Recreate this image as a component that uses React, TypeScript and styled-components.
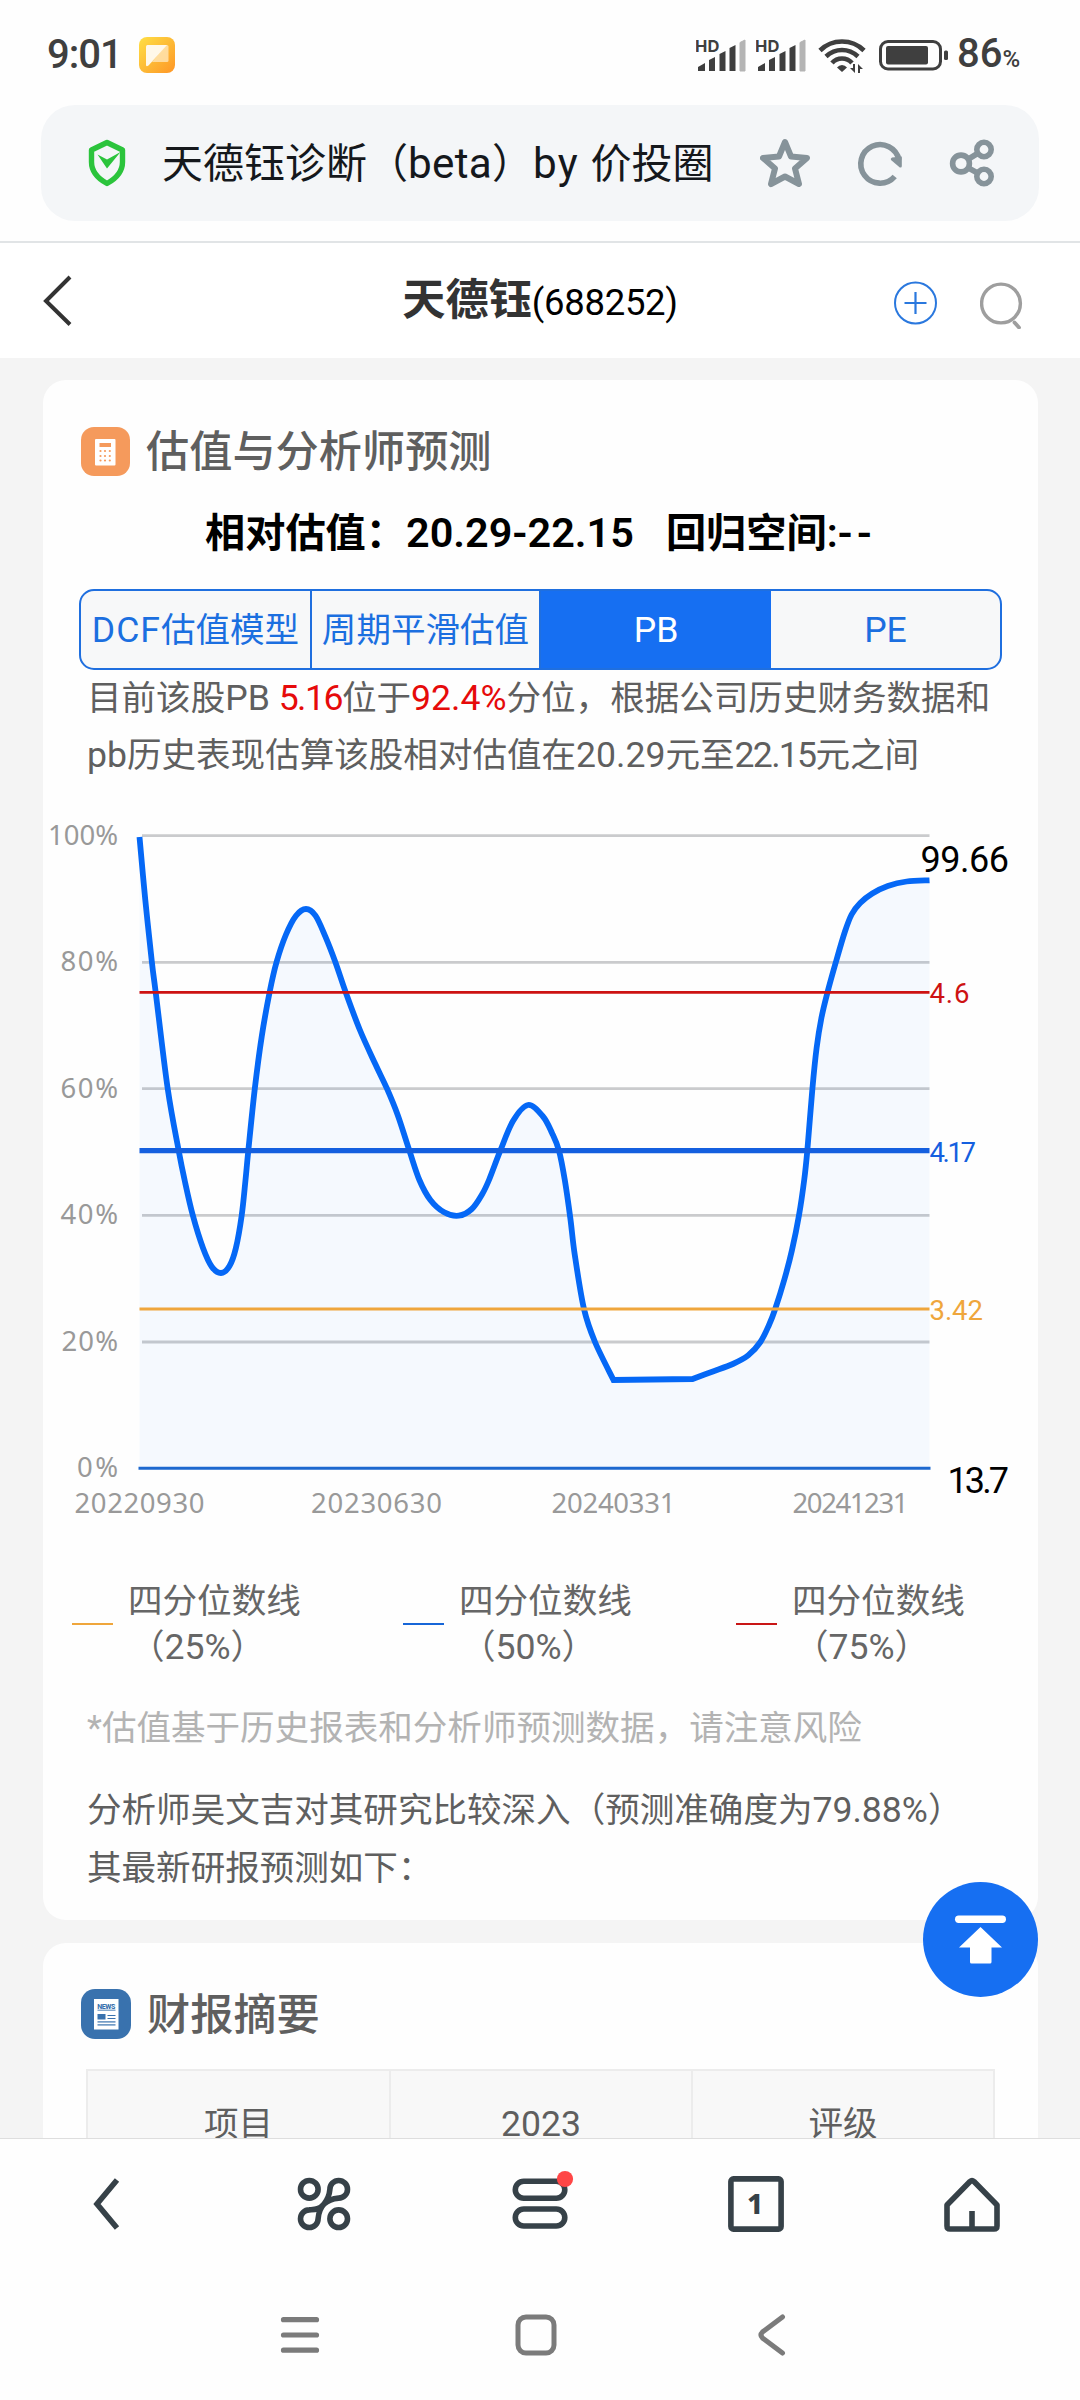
import React from "react";
import styled, { createGlobalStyle } from "styled-components";

const GlobalStyle = createGlobalStyle`
  * { box-sizing: border-box; }
  html, body { margin: 0; padding: 0; }
  body { background: #fefefe; }
  svg { display: block; flex: none; }
`;

const Screen = styled.div`
  position: relative;
  display: flex;
  flex-direction: column;
  width: 1080px;
  height: 2400px;
  overflow: hidden;
  background: #fefefe;
  color: #5f5f5f;
  font-family: Roboto, "Noto Sans CJK SC", sans-serif;
  font-size: 34.56px;
  white-space: nowrap;
`;

/* ---------- system status bar ---------- */

const StatusBar = styled.header`
  display: flex;
  flex: none;
  align-items: center;
  justify-content: space-between;
  height: 105px;
  padding: 4px 57px 0 47px;
  color: #3f3f3f;
`;

const StatusGroup = styled.div`
  display: flex;
  align-items: center;
`;

const Clock = styled.span`
  width: 92px;
  font-size: 40px;
  font-weight: 500;
  line-height: 48px;
  letter-spacing: -1px;
`;

const BatteryBox = styled.span`
  margin-left: 12px;
`;

const BatteryLevel = styled.span`
  display: flex;
  align-items: baseline;
  width: 66px;
  margin-left: 7px;
  padding-top: 3px;
  font-size: 40px;
  font-weight: 500;
  line-height: 48px;
`;

const Percent = styled.small`
  font-size: 24px;
`;

/* ---------- browser address bar ---------- */

const AddressWrap = styled.div`
  flex: none;
  height: 138px;
  padding: 0 41px;
  border-bottom: 2px solid #e1e4e6;
`;

const AddressBar = styled.div`
  display: flex;
  align-items: center;
  height: 116px;
  padding: 0 44px 0 47px;
  border-radius: 34px;
  background: #f4f6f8;
`;

const PageTitle = styled.span`
  flex: 1;
  margin-left: 36px;
  padding-top: 2px;
  color: #15181c;
  font-size: 41px;
  line-height: 60px;
`;

const AddressActions = styled.div`
  display: flex;
  align-items: center;
  gap: 45.5px;
`;

/* ---------- page header ---------- */

const PageHeader = styled.div`
  display: grid;
  flex: none;
  grid-template-columns: 300px 1fr 300px;
  align-items: center;
  height: 115px;
  padding: 0 56px 0 42px;
  background: #fff;
`;

const StockName = styled.h1`
  display: flex;
  align-items: baseline;
  justify-content: center;
  margin: 0 0 0 14px;
  padding-top: 2px;
  color: #333;
  font-size: 43.2px;
  font-weight: 700;
  line-height: 60px;
`;

const StockCode = styled.span`
  color: #000;
  font-size: 36.5px;
  font-weight: 400;
  letter-spacing: -0.3px;
`;

const HeaderActions = styled.div`
  display: flex;
  justify-content: flex-end;
  gap: 42px;
  padding-top: 6px;
`;

/* ---------- content ---------- */

const Content = styled.main`
  display: flex;
  flex: 1;
  flex-direction: column;
  gap: 23px;
  min-height: 0;
  padding: 22px 42px 0 43px;
  overflow: hidden;
  background: #f4f4f4;
`;

const Card = styled.section<{ $top: number }>`
  display: flex;
  flex: none;
  flex-direction: column;
  padding: ${(p) => p.$top}px 0 23px;
  border-radius: 23px;
  background: #fefefe;
`;

const CardTitle = styled.h2<{ $height: number }>`
  display: flex;
  align-items: center;
  gap: 16px;
  height: ${(p) => p.$height}px;
  margin: 0 0 0 38px;
  color: #5f5f5f;
  font-size: 43.2px;
  font-weight: 500;
  line-height: 48px;
`;

const CardTitleText = styled.span`
  padding-top: 4px;
`;

const Headline = styled.p`
  display: flex;
  justify-content: center;
  gap: 32px;
  margin: 28px 0 0;
  color: #000;
  font-size: 40.2px;
  font-weight: 600;
  line-height: 62px;
`;

const Num = styled.span<{ $red?: boolean; $track?: number }>`
  color: ${(p) => (p.$red ? "#e60a0a" : "inherit")};
  font-size: 1.03em;
  line-height: 0;
  letter-spacing: ${(p) => p.$track ?? 0}px;
`;

const Tabs = styled.div`
  display: grid;
  grid-template-columns: 229px 229px 232px 1fr;
  height: 81px;
  margin: 24px 36px 0;
  overflow: hidden;
  border: 2px solid #1f6fdf;
  border-radius: 15px;
  background: #f7f8f9;
`;

const Tab = styled.button<{ $active?: boolean }>`
  padding: 0;
  border: 0;
  border-left: 2px solid #1f6fdf;
  background: ${(p) => (p.$active ? "#166ff2" : "transparent")};
  color: ${(p) => (p.$active ? "#fff" : "#1b6fe0")};
  font: inherit;
  line-height: 70px;
  white-space: nowrap;

  &:first-child,
  &:last-child {
    border-left: 0;
  }
`;

const Paragraph = styled.p<{ $gap: number; $muted?: boolean; $leading?: number }>`
  margin: ${(p) => p.$gap}px 0 0 44px;
  color: ${(p) => (p.$muted ? "#b3b3b3" : "#5f5f5f")};
  line-height: ${(p) => p.$leading ?? 57}px;
`;

const Chart = styled.svg`
  margin-top: 16px;
  font-family: Roboto, sans-serif;
`;

const Legend = styled.ul`
  display: grid;
  grid-template-columns: 331px 333px 1fr;
  margin: 38px 0 0 29px;
  padding: 0;
  list-style: none;
`;

const LegendItem = styled.li<{ $color: string }>`
  display: flex;
  align-items: center;
  gap: 15px;
  color: #666;
  line-height: 46px;

  &::before {
    width: 41px;
    height: 2px;
    background: ${(p) => p.$color};
    content: "";
  }
`;

const LegendShare = styled.span`
  margin-left: 2px;
`;

const ReportTable = styled.div`
  display: grid;
  grid-template-columns: 301px 302px 1fr;
  height: 160px;
  margin: 30px 43px 0;
  border: 2px solid #ececec;
  background: #f8f8f8;
`;

const ReportCell = styled.div`
  padding-top: 23px;
  line-height: 60px;
  text-align: center;

  & + & {
    border-left: 2px solid #ececec;
  }
`;

/* ---------- floating button and bottom bars ---------- */

const BackToTop = styled.button`
  position: absolute;
  top: 1882px;
  right: 42px;
  width: 115px;
  height: 115px;
  padding: 0;
  border: 0;
  border-radius: 50%;
  background: #166ff2;
`;

const Toolbar = styled.nav`
  display: grid;
  flex: none;
  grid-template-columns: repeat(5, 1fr);
  align-items: center;
  justify-items: center;
  height: 132px;
  padding-bottom: 2px;
  border-top: 1px solid #dedede;
  background: #fefefe;
`;

const SystemNav = styled.nav`
  display: grid;
  flex: none;
  grid-template-columns: repeat(3, 236px);
  align-items: center;
  justify-items: center;
  height: 130px;
  padding-left: 182px;
  background: #fefefe;
`;

/* ---------- icons ---------- */

const AppIcon = () => (
  <svg width="36" height="36" viewBox="0 0 36 36">
    <defs>
      <linearGradient id="app-bg" x1="0" y1="0" x2="1" y2="1">
        <stop offset="0" stopColor="#ffdf45" />
        <stop offset="0.5" stopColor="#fdbb36" />
        <stop offset="1" stopColor="#ff9626" />
      </linearGradient>
    </defs>
    <rect width="36" height="36" rx="8" fill="url(#app-bg)" />
    <path d="M27 8h1q1.500 0 1.500 1.500v14q0 1.500-1.500 1.500H13z" fill="#ffe3b0" opacity="0.85" />
    <path d="M8.500 8H28L9.500 28.500Q7 30 7 28V9.500Q7 8 8.500 8z" fill="#fff8ea" />
  </svg>
);

const Signal = () => (
  <svg width="60" height="36" viewBox="0 0 60 36">
    <text x="-1" y="14.500" fontFamily="Inter, sans-serif" fontSize="16.500" fontWeight="700" fill="#3f3f3f" textLength="24.500">HD</text>
    <path d="M2 34v-4l7-4v8zM13 34V23l6-3v14zM23.500 34V17l6-3v20zM33.500 34V11l6-3v26z" fill="#3f3f3f" />
    <path d="M44 34V5.500l5-2.500v31z" fill="#b4b4b4" stroke="#b4b4b4" strokeLinejoin="round" />
  </svg>
);

const Wifi = () => (
  <svg width="50" height="36" viewBox="0 0 50 36">
    <g fill="none" stroke="#3f3f3f" strokeWidth="4.600">
      <path d="M4 13.500Q13 4.500 26 4.500T48 13.500" />
      <path d="M10 19.500Q17 13 26 13T42 19.500" />
      <path d="M16 26Q20 21.500 26 21.500T36 26" />
    </g>
    <path d="M26 28q3 0 5 2.500L26 35l-5-4.500Q23 28 26 28z" fill="#3f3f3f" />
    <path d="M39 27v9l-5-5h3v-4zM42 36v-9l5 5h-3v4z" fill="#3f3f3f" />
  </svg>
);

const BatteryIcon = () => (
  <svg width="72" height="32" viewBox="0 0 72 32">
    <rect x="2.500" y="2.500" width="60" height="27.500" rx="7.500" fill="none" stroke="#3f3f3f" strokeWidth="3" />
    <rect x="8" y="7" width="42" height="18.500" rx="2" fill="#3f3f3f" />
    <rect x="66" y="11.500" width="4" height="9.500" rx="1.500" fill="#3f3f3f" />
  </svg>
);

const Shield = () => (
  <svg width="38" height="48" viewBox="0 0 38 48">
    <path d="M19 3.500 34.500 11v12q0 13-15.500 21.500Q3.500 36 3.500 23V11z" fill="none" stroke="#2bc43c" strokeWidth="5.400" strokeLinejoin="round" />
    <path d="M9.500 15.500 19 20.500 32.500 13 19 29.500z" fill="#2bc43c" />
  </svg>
);

const Star = () => (
  <svg width="50" height="50" viewBox="0 0 50 50">
    <path
      d="M25 4 31 18.500 47 20 35 30.500 39 46 25 38.500 11 46 15 30.500 3 20 19 18.500z"
      fill="none"
      stroke="#86939a"
      strokeWidth="6"
      strokeLinejoin="round"
    />
  </svg>
);

const Refresh = () => (
  <svg width="48" height="48" viewBox="0 0 48 48">
    <path d="M38.700 37.500A19.300 19.300 0 1 1 43 21" fill="none" stroke="#86939a" strokeWidth="5.600" />
    <path d="M45.800 17.500V27q0 2-2 1.500L35 21q-1-1.500 1-2.500z" fill="#86939a" />
  </svg>
);

const Share = () => (
  <svg width="46" height="50" viewBox="0 0 46 50">
    <g fill="none" stroke="#86939a" strokeWidth="5.600">
      <circle cx="12" cy="25.500" r="8.400" />
      <circle cx="35" cy="11.500" r="7.200" />
      <circle cx="35" cy="38.500" r="7.200" />
      <path d="M19.500 21 28.500 15.500M19.500 30 28.500 35" />
    </g>
  </svg>
);

const HeaderBack = () => (
  <svg width="32" height="52" viewBox="0 0 32 52">
    <path d="M28 2 4 26 28 49.500" fill="none" stroke="#333" strokeWidth="4" />
  </svg>
);

const AddCircle = () => (
  <svg width="44" height="46" viewBox="0 0 44 46">
    <circle cx="21.500" cy="24" r="20.500" fill="none" stroke="#2a78de" strokeWidth="2" />
    <path d="M21.500 13v22M10.500 24h22" stroke="#2a78de" strokeWidth="2.200" />
  </svg>
);

const Search = () => (
  <svg width="44" height="50" viewBox="0 0 44 50">
    <circle cx="21" cy="24.500" r="19.400" fill="none" stroke="#9e9e9e" strokeWidth="3.400" />
    <path d="M34.500 43.500 39 48.500" stroke="#9e9e9e" strokeWidth="3.800" strokeLinecap="round" />
  </svg>
);

const Calculator = () => (
  <svg width="49" height="49" viewBox="0 0 49 49">
    <rect width="49" height="49" rx="13" fill="#f59a5c" />
    <rect x="14" y="12" width="20.500" height="26.500" rx="1" fill="#fff" />
    <rect x="18.500" y="16" width="11.500" height="4" fill="#f59a5c" />
    <g fill="#f59a5c">
      {[24, 29, 33.5].map((y) =>
        [19.5, 24, 28.8].map((x) => <circle key={`${x}-${y}`} cx={x} cy={y} r="1.1" />)
      )}
    </g>
  </svg>
);

const Newspaper = () => (
  <svg width="50" height="50" viewBox="0 0 50 50">
    <rect width="50" height="50" rx="14" fill="#3972ae" />
    <rect x="13" y="10" width="24.500" height="30.500" fill="#fff" />
    <text x="16.300" y="19.500" fontFamily="Roboto, sans-serif" fontSize="7" fontWeight="800" fill="#3972ae" textLength="18">NEWS</text>
    <g fill="#3972ae">
      <rect x="16.500" y="20.700" width="18" height="0.900" />
      <rect x="16.500" y="25" width="8" height="5.500" />
      <rect x="26.500" y="26" width="8" height="1" />
      <rect x="26.500" y="29" width="8" height="1" />
      <rect x="16.500" y="32.300" width="18" height="1.200" />
      <rect x="16.500" y="35.300" width="18" height="1.200" />
    </g>
  </svg>
);

const ToTop = () => (
  <svg width="115" height="115" viewBox="0 0 115 115">
    <rect x="32" y="33.500" width="51" height="7.500" rx="3.700" fill="#fff" />
    <path d="M57.500 45 79 65.500H68.500V80q0 1.500-1.500 1.500H48.500Q47 81.500 47 80V65.500H36z" fill="#fff" />
  </svg>
);

const toolStroke = { fill: "none", stroke: "#364148", strokeWidth: 5.6 };

const ToolBack = () => (
  <svg width="32" height="56" viewBox="0 0 32 56">
    <path d="M25 4 5 28l20 24" {...toolStroke} />
  </svg>
);

const ToolApps = () => (
  <svg width="56" height="56" viewBox="0 0 56 56">
    <g {...toolStroke}>
      <circle cx="13.300" cy="13.300" r="8.800" />
      <circle cx="42.700" cy="42.700" r="8.800" />
      <path d="M28 28C33 22 33.500 18 33.900 13.300A8.800 8.800 0 1 1 42.700 22.100C38 22.500 33 23 28 28C23 33 22.500 38 22.100 42.700A8.800 8.800 0 1 1 13.300 33.900C18 33.500 23 34 28 28z" strokeLinejoin="round" />
    </g>
  </svg>
);

const ToolMenu = () => (
  <svg width="68" height="68" viewBox="-4 0 68 68">
    <g {...toolStroke}>
      <rect x="5.300" y="11.300" width="49.500" height="17" rx="8.500" />
      <rect x="5.300" y="39" width="49.500" height="17" rx="8.500" />
    </g>
    <circle cx="55" cy="9" r="8.100" fill="#ff4646" />
  </svg>
);

const ToolWindows = () => (
  <svg width="56" height="56" viewBox="0 0 56 56">
    <rect x="2.900" y="2.900" width="50.200" height="50.200" rx="2.500" {...toolStroke} />
    <text x="27" y="37.500" fontFamily="Noto Sans, sans-serif" fontSize="28" fontWeight="800" fill="#364148" textAnchor="middle">1</text>
  </svg>
);

const ToolHome = () => (
  <svg width="58" height="56" viewBox="0 0 58 56">
    <path d="M4 29 27 5.500q2-1.800 4 0L54 29v21q0 3-3 3H7q-3 0-3-3z" {...toolStroke} strokeLinejoin="round" />
    <path d="M29 35v18" {...toolStroke} />
  </svg>
);

const NavMenu = () => (
  <svg width="40" height="40" viewBox="0 0 40 40">
    <path d="M3.500 4.700h33M3.500 20h33M3.500 35.200h33" stroke="#7b7b7b" strokeWidth="5.200" strokeLinecap="round" />
  </svg>
);

const NavHome = () => (
  <svg width="42" height="42" viewBox="0 0 42 42">
    <rect x="3" y="3" width="36" height="36" rx="8" fill="none" stroke="#7b7b7b" strokeWidth="5" />
  </svg>
);

const NavBack = () => (
  <svg width="30" height="44" viewBox="0 0 30 44">
    <path d="M25.500 4 5.500 19q-3 3 0 6l20 15" fill="none" stroke="#7b7b7b" strokeWidth="5" strokeLinecap="round" />
  </svg>
);

/* ---------- chart ---------- */

type Point = [number, number];

const fallAndRise: Point[] = [
  [139.5, 837], [145.3, 900], [151.9, 962.3], [155.7, 992.3], [167.7, 1088.7], [178.7, 1150.7],
  [184.6, 1180], [192.8, 1215.3], [203, 1248], [211.8, 1266.7], [221, 1273],
  [229.5, 1266], [235.9, 1248], [241.7, 1215.3], [245.5, 1180], [248.3, 1150.7],
  [254.8, 1088.7], [261.7, 1036.7], [269.6, 992.3], [276.5, 962.3], [285.8, 935],
  [296, 915.7], [306, 909], [315.5, 915.7], [325.4, 936.7], [335.4, 962.3],
  [345.7, 992.3], [359.9, 1030], [375.3, 1064], [387, 1088.7], [397.7, 1115],
  [409.4, 1150.7], [419.4, 1180], [430.4, 1200], [444.2, 1212.3], [458.7, 1215.7],
  [471.8, 1209], [482, 1194.5], [489, 1180], [500.3, 1150.7], [513, 1121],
  [528, 1105], [543, 1116.5], [552, 1133], [559, 1150.7], [564.8, 1180],
  [570.3, 1218], [574.8, 1255], [584, 1309], [595, 1342], [613.5, 1380],
];

const recovery: Point[] = [
  [692.5, 1379], [712.2, 1371.7], [732.8, 1364], [748.3, 1355.3], [760.4, 1342],
  [769, 1325], [775.2, 1309], [784.5, 1279], [792, 1250], [799, 1215.3],
  [804.2, 1180], [807.3, 1150.7], [812.4, 1088.7], [816.6, 1048], [821.4, 1018],
  [827.5, 992.3], [835.8, 962.3], [844.8, 932], [851.6, 914.5], [860.2, 903],
  [872.3, 893.5], [887.8, 886], [906.7, 881.5], [929.5, 880.3],
];

/* Catmull-Rom interpolation expressed as cubic Bézier segments. */
const smooth = (pts: Point[]) =>
  pts
    .slice(1)
    .map((p, i) => {
      const a = pts[Math.max(i - 1, 0)];
      const b = pts[i];
      const d = pts[Math.min(i + 2, pts.length - 1)];
      return `C${b[0] + (p[0] - a[0]) / 6} ${b[1] + (p[1] - a[1]) / 6} ${p[0] - (d[0] - b[0]) / 6} ${p[1] - (d[1] - b[1]) / 6} ${p[0]} ${p[1]}`;
    })
    .join("");

const curve = `M139.5 837${smooth(fallAndRise)}L692.5 1379${smooth(recovery)}`;

const yTicks: [string, number, number][] = [
  ["100%", 835.7, 70], ["80%", 962.3, 57.5], ["60%", 1088.7, 57.5],
  ["40%", 1215.3, 57.5], ["20%", 1342, 56.5], ["0%", 1468.3, 41],
];

const xTicks: [string, number, number][] = [
  ["20220930", 139.5, 130], ["20230630", 376.5, 131],
  ["20240331", 613.5, 124], ["20241231", 850.5, 116],
];

const quartiles: [string, number, number, string, number][] = [
  ["3.42", 1309, 3, "#efa63c", 53.5],
  ["4.17", 1150.7, 5.2, "#145fdf", 46.5],
  ["4.6", 992.3, 2.8, "#cd1212", 40],
];

const QuartileChart = () => (
  <Chart width="995" height="740" viewBox="43 800 995 740">
    {yTicks.map(([label, y, w]) => (
      <g key={label}>
        {y < 1400 && <path d={`M142 ${y}H929.5`} stroke="#cacbcd" strokeWidth="2.8" />}
        <text x={118 - w} y={y + 9} fontFamily="Noto Sans, sans-serif" fontSize="27.5" fill="#999" textLength={w}>{label}</text>
      </g>
    ))}
    {xTicks.map(([label, x, w]) => (
      <text key={label} x={x - w / 2} y="1512.500" fontFamily="Noto Sans, sans-serif" fontSize="27.5" fill="#999" textLength={w}>{label}</text>
    ))}
    <path d={`${curve}V1468.300H139.500z`} fill="rgba(6, 125, 250, 0.037)" />
    <path d="M138.500 1468.300H930.500" stroke="#1c68cf" strokeWidth="3" />
    <path d={curve} fill="none" stroke="#0568f6" strokeWidth="5.800" />
    {quartiles.map(([label, y, thickness, color, w]) => (
      <g key={label}>
        <path d={`M139.500 ${y}H929.500`} stroke={color} strokeWidth={thickness} />
        <text x="929.500" y={y + 11} fontSize="27.500" fill={color} textLength={w}>{label}</text>
      </g>
    ))}
    <text x="920.500" y="871.500" fontSize="36" fill="#000" textLength="88.500">99.66</text>
    <text x="947.500" y="1492.500" fontSize="36" fill="#000" textLength="61.500">13.7</text>
  </Chart>
);

const legend: [string, string][] = [
  ["25%", "#efa63c"],
  ["50%", "#1766d8"],
  ["75%", "#c91616"],
];

export default function App() {
  return (
    <Screen>
      <GlobalStyle />

      <StatusBar>
        <StatusGroup>
          <Clock>9:01</Clock>
          <AppIcon />
        </StatusGroup>
        <StatusGroup>
          <Signal />
          <Signal />
          <Wifi />
          <BatteryBox>
            <BatteryIcon />
          </BatteryBox>
          <BatteryLevel>
            86<Percent>%</Percent>
          </BatteryLevel>
        </StatusGroup>
      </StatusBar>

      <AddressWrap>
        <AddressBar>
          <Shield />
          <PageTitle>
            天德钰诊断（<Num $track={0.3}>beta</Num>）<Num $track={1.2}>by </Num>价投圈
          </PageTitle>
          <AddressActions>
            <Star />
            <Refresh />
            <Share />
          </AddressActions>
        </AddressBar>
      </AddressWrap>

      <PageHeader>
        <HeaderBack />
        <StockName>
          天德钰<StockCode>(688252)</StockCode>
        </StockName>
        <HeaderActions>
          <AddCircle />
          <Search />
        </HeaderActions>
      </PageHeader>

      <Content>
        <Card $top={47}>
          <CardTitle $height={48}>
            <Calculator />
            <CardTitleText>估值与分析师预测</CardTitleText>
          </CardTitle>
          <Headline>
            <span>
              相对估值：<Num>20.29-22.15</Num>
            </span>
            <span>
              回归空间:<Num $track={4}>--</Num>
            </span>
          </Headline>
          <Tabs>
            <Tab><Num $track={1}>DCF</Num>估值模型</Tab>
            <Tab>周期平滑估值</Tab>
            <Tab $active><Num>PB</Num></Tab>
            <Tab><Num>PE</Num></Tab>
          </Tabs>
          <Paragraph $gap={0}>
            目前该股<Num>PB </Num><Num $red $track={-1.5}>5.16</Num>位于<Num $red>92.4%</Num>分位，根据公司历史财务数据和
            <br />
            <Num>pb</Num>历史表现估算该股相对估值在<Num>20.29</Num>元至<Num $track={-1.7}>22.15</Num>元之间
          </Paragraph>

          <QuartileChart />

          <Legend>
            {legend.map(([share, color]) => (
              <LegendItem key={share} $color={color}>
                <span>
                  四分位数线
                  <br />
                  <LegendShare>（<Num>{share}</Num>）</LegendShare>
                </span>
              </LegendItem>
            ))}
          </Legend>

          <Paragraph $gap={30} $muted>
            *估值基于历史报表和分析师预测数据，请注意风险
          </Paragraph>
          <Paragraph $gap={24} $leading={58}>
            分析师吴文吉对其研究比较深入（预测准确度为<Num>79.88%</Num>）
            <br />
            其最新研报预测如下：
          </Paragraph>
        </Card>

        <Card $top={46}>
          <CardTitle $height={50}>
            <Newspaper />
            <CardTitleText>财报摘要</CardTitleText>
          </CardTitle>
          <ReportTable>
            <ReportCell>项目</ReportCell>
            <ReportCell><Num>2023</Num></ReportCell>
            <ReportCell>评级</ReportCell>
          </ReportTable>
        </Card>
      </Content>

      <Toolbar>
        <ToolBack />
        <ToolApps />
        <ToolMenu />
        <ToolWindows />
        <ToolHome />
      </Toolbar>

      <SystemNav>
        <NavMenu />
        <NavHome />
        <NavBack />
      </SystemNav>

      <BackToTop aria-label="top">
        <ToTop />
      </BackToTop>
    </Screen>
  );
}
